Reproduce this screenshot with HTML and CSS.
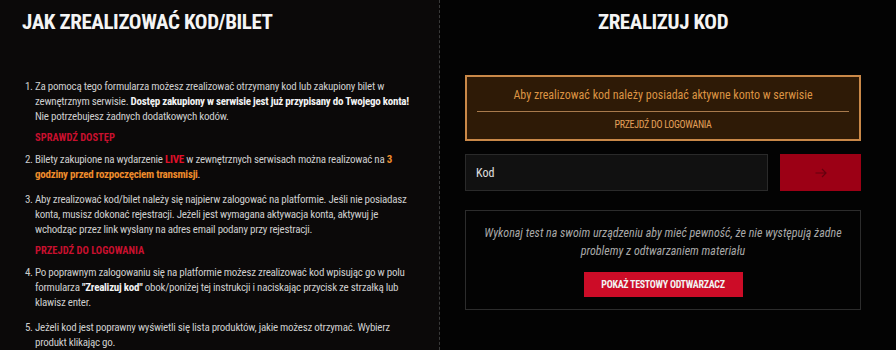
FILE: index.html
```html
<!DOCTYPE html>
<html lang="pl">
<head>
<meta charset="utf-8">
<title>Zrealizuj kod</title>
<link rel="stylesheet" href="styles.css">
</head>
<body>
<div class="page">
  <section class="guide">
    <h1 class="title">JAK ZREALIZOWAĆ KOD/BILET</h1>
    <ol class="steps">
      <li>
        <p>Za pomocą tego formularza możesz zrealizować otrzymany kod lub zakupiony bilet w zewnętrznym serwisie. <b>Dostęp zakupiony w serwisie jest już przypisany do Twojego konta!</b> Nie potrzebujesz żadnych dodatkowych kodów.</p>
        <a class="step-link" href="#">SPRAWDŹ DOSTĘP</a>
      </li>
      <li>
        <p>Bilety zakupione na wydarzenie <b class="live">LIVE</b> w zewnętrznych serwisach można realizować na <b class="warn">3 godziny przed rozpoczęciem transmisji</b>.</p>
      </li>
      <li>
        <p>Aby zrealizować kod/bilet należy się najpierw zalogować na platformie. Jeśli nie posiadasz konta, musisz dokonać rejestracji. Jeżeli jest wymagana aktywacja konta, aktywuj je wchodząc przez link wysłany na adres email podany przy rejestracji.</p>
        <a class="step-link" href="#">PRZEJDŹ DO LOGOWANIA</a>
      </li>
      <li>
        <p>Po poprawnym zalogowaniu się na platformie możesz zrealizować kod wpisując go w polu formularza <b>"Zrealizuj kod"</b> obok/poniżej tej instrukcji i naciskając przycisk ze strzałką lub klawisz enter.</p>
      </li>
      <li>
        <p>Jeżeli kod jest poprawny wyświetli się lista produktów, jakie możesz otrzymać. Wybierz produkt klikając go.</p>
      </li>
    </ol>
  </section>
  <section class="redeem">
    <h2 class="title title-center">ZREALIZUJ KOD</h2>
    <div class="notice">
      <p class="notice-text">Aby zrealizować kod należy posiadać aktywne konto w serwisie</p>
      <a class="notice-link" href="#">PRZEJDŹ DO LOGOWANIA</a>
    </div>
    <form class="code-form">
      <input class="code-input" type="text" placeholder="Kod">
      <button class="code-submit" type="button" aria-label="Zrealizuj">
        <svg class="arrow" width="12" height="10" viewBox="0 0 12 10" aria-hidden="true">
          <path d="M0.5 5H11M7 1L11 5L7 9" fill="none" stroke="currentColor" stroke-width="1.2"/>
        </svg>
      </button>
    </form>
    <div class="test-box">
      <p class="test-text">Wykonaj test na swoim urządzeniu aby mieć pewność, że nie występują żadne problemy z odtwarzaniem materiału</p>
      <button class="test-btn" type="button">POKAŻ TESTOWY ODTWARZACZ</button>
    </div>
  </section>
</div>
</body>
</html>
```
FILE: styles.css
```css
* { box-sizing: border-box; }
html, body { margin: 0; padding: 0; background: #030303; }
body {
  font-family: "Roboto Condensed", Roboto, sans-serif;
  color: #cdcdcd;
  width: 896px;
  height: 350px;
  overflow: hidden;
}
.page {
  display: grid;
  grid-template-columns: 440px 456px;
  height: 350px;
}
.guide {
  background: #0b0909;
  padding: 9px 28px 0 22px;
  border-right: 1px dashed #3a3a3a;
}
.title {
  margin: 0;
  font-size: 21px;
  line-height: 26px;
  font-weight: 700;
  color: #f4f4f4;
  letter-spacing: -0.4px;
}
.title-center { text-align: center; }
.steps {
  margin: 44px 0 0 0;
  padding-left: 13px;
  font-size: 11px;
  line-height: 15px;
  letter-spacing: -0.25px;
}
.steps li { margin-bottom: 10px; }
.steps p { margin: 0; }
.steps b { color: #f2f2f2; }
.steps b.live { color: #e0102a; }
.steps b.warn { color: #ee8c2c; }
.step-link {
  display: block;
  margin-top: 6px;
  margin-bottom: -3px;
  color: #c8102e;
  font-weight: 700;
  text-decoration: none;
  font-size: 10.5px;
  letter-spacing: 0;
}
.redeem {
  padding: 9px 35px 0 25px;
}
.notice {
  margin-top: 40px;
  border: 2px solid #c98848;
  background: #2e1a06;
  padding: 10px 10px 7px;
  text-align: center;
}
.notice-text {
  margin: 0;
  color: #dc9444;
  font-size: 12px;
  line-height: 16px;
  padding-bottom: 8px;
  border-bottom: 1px solid #a87a4c;
}
.notice-link {
  display: block;
  margin-top: 6px;
  color: #e3a05a;
  text-decoration: none;
  font-size: 10px;
  line-height: 14px;
  letter-spacing: -0.3px;
}
.code-form {
  display: flex;
  gap: 12px;
  margin-top: 13px;
}
.code-input {
  flex: 1;
  height: 37px;
  background: #111111;
  border: 1px solid #2a2a2a;
  padding: 0 10px;
  font-family: inherit;
  font-size: 12px;
  color: #e0e0e0;
}
.code-input::placeholder { color: #e0e0e0; }
.code-submit {
  width: 81px;
  height: 37px;
  border: 0;
  padding: 0;
  background: #9c0015;
  color: #64000f;
  display: flex;
  align-items: center;
  justify-content: center;
}
.arrow { display: block; }
.test-box {
  margin-top: 19px;
  border: 1px solid #2c2c2c;
  padding: 13px 12px 12px;
  text-align: center;
}
.test-text {
  margin: 0;
  font-style: italic;
  color: #a8a8a8;
  font-size: 12px;
  line-height: 18px;
}
.test-btn {
  margin-top: 12px;
  width: 159px;
  height: 25px;
  border: 0;
  background: #cc0c27;
  color: #f2f2f2;
  font-family: inherit;
  font-size: 10px;
  font-weight: 700;
  letter-spacing: -0.3px;
  white-space: nowrap;
}
```
